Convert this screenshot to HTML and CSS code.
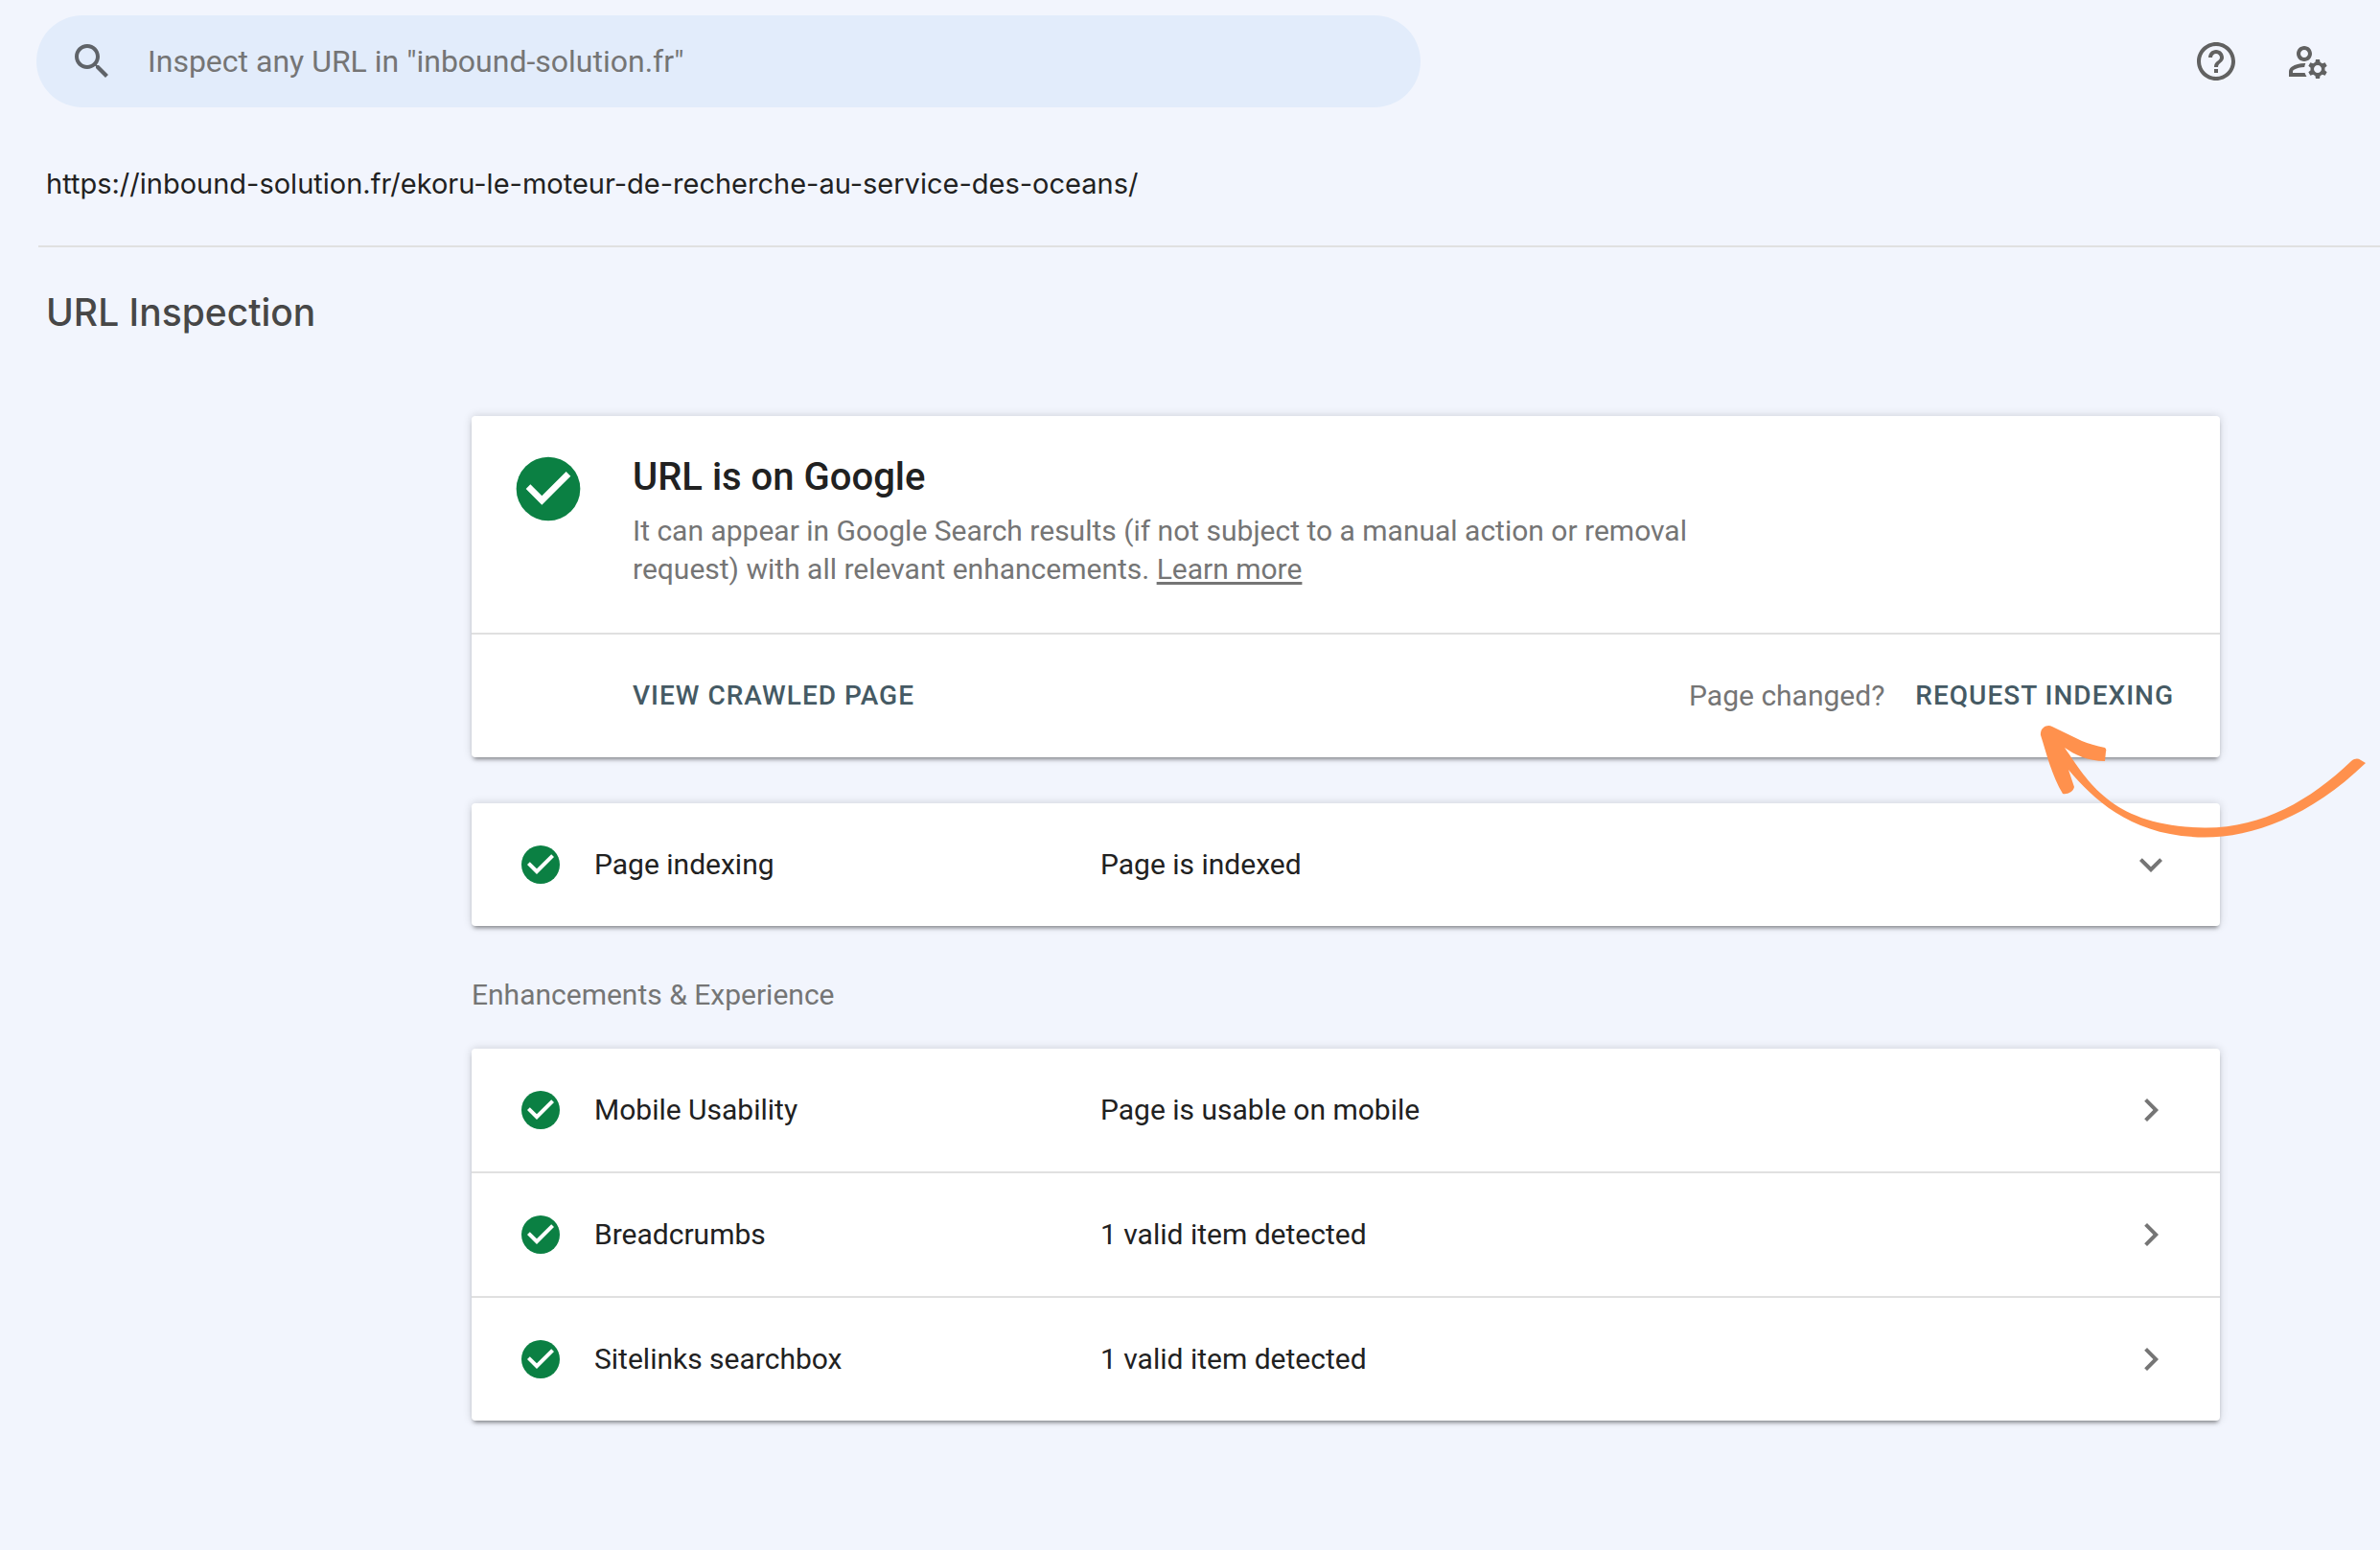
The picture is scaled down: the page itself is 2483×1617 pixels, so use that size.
FILE: index.html
```html
<!DOCTYPE html>
<html lang="en">
<head>
<meta charset="utf-8">
<title>URL Inspection</title>
<link rel="stylesheet" href="styles.css">
</head>
<body>
<svg class="sprite" aria-hidden="true">
  <symbol id="check" viewBox="0 0 24 24"><circle cx="12" cy="12" r="10" fill="#0b8043"/><path fill="#fff" d="M10 17l-5-5 1.410-1.410L10 14.170l7.590-7.590L19 8z"/></symbol>
  <symbol id="chevron-right" viewBox="0 0 24 24"><path d="M10 6L8.590 7.410 13.170 12l-4.580 4.590L10 18l6-6z"/></symbol>
  <symbol id="chevron-down" viewBox="0 0 24 24"><path d="M16.590 8.590L12 13.170 7.410 8.590 6 10l6 6 6-6z"/></symbol>
</svg>

<header class="topbar">
  <form class="search" role="search">
    <svg class="icon" viewBox="0 0 24 24" aria-hidden="true"><path d="M15.500 14h-.790l-.280-.270C15.410 12.590 16 11.110 16 9.500 16 5.910 13.090 3 9.500 3S3 5.910 3 9.500 5.910 16 9.500 16c1.610 0 3.090-.590 4.230-1.570l.270.280v.790l5 4.990L20.490 19l-4.990-5zm-6 0C7.010 14 5 11.990 5 9.500S7.010 5 9.500 5 14 7.010 14 9.500 11.990 14 9.500 14z"/></svg>
    <input class="search-input" type="text" aria-label="Inspect a URL" placeholder="Inspect any URL in &quot;inbound-solution.fr&quot;">
  </form>
  <div class="tools">
    <button class="icon-button" type="button" aria-label="Help">
      <svg class="icon" viewBox="0 0 24 24"><path d="M11 18h2v-2h-2v2zm1-16C6.480 2 2 6.480 2 12s4.480 10 10 10 10-4.480 10-10S17.520 2 12 2zm0 18c-4.410 0-8-3.590-8-8s3.590-8 8-8 8 3.590 8 8-3.590 8-8 8zm0-14c-2.210 0-4 1.790-4 4h2c0-1.100.9-2 2-2s2 .9 2 2c0 2-3 1.750-3 5h2c0-2.250 3-2.500 3-5 0-2.210-1.790-4-4-4z"/></svg>
    </button>
    <button class="icon-button" type="button" aria-label="User settings">
      <svg class="icon" viewBox="0 0 24 24"><path d="M4 18v-.65c0-.34.16-.66.41-.81C6.1 15.53 8.03 15 10 15c.03 0 .05 0 .08.01.1-.7.3-1.37.59-1.98-.22-.02-.44-.03-.67-.03-2.42 0-4.68.67-6.61 1.82-.88.52-1.39 1.5-1.39 2.53V20h9.260c-.42-.6-.75-1.280-.97-2H4z"/><path d="M10 12c2.210 0 4-1.790 4-4s-1.790-4-4-4-4 1.790-4 4 1.790 4 4 4zm0-6c1.100 0 2 .9 2 2s-.9 2-2 2-2-.9-2-2 .9-2 2-2z"/><path d="M20.750 16c0-.22-.03-.42-.06-.63l1.140-1.010-1-1.730-1.450.49c-.32-.27-.68-.48-1.080-.63L18 11h-2l-.3 1.490c-.4.15-.76.36-1.080.63l-1.450-.49-1 1.730 1.140 1.010c-.03.21-.06.41-.06.63s.03.42.06.63l-1.140 1.010 1 1.730 1.450-.49c.32.27.68.48 1.080.63L16 21h2l.3-1.490c.4-.15.76-.36 1.080-.63l1.450.49 1-1.730-1.140-1.010c.03-.21.06-.41.06-.63zM17 18c-1.100 0-2-.9-2-2s.9-2 2-2 2 .9 2 2-.9 2-2 2z"/></svg>
    </button>
  </div>
</header>

<div class="url-bar">https://inbound-solution.fr/ekoru-le-moteur-de-recherche-au-service-des-oceans/</div>

<main>
  <h1 class="page-title">URL Inspection</h1>
  <div class="content">
    <section class="card">
      <div class="verdict">
        <svg class="verdict-icon" aria-hidden="true"><use href="#check"/></svg>
        <div class="verdict-text">
          <h2 class="verdict-title">URL is on Google</h2>
          <p class="verdict-copy">It can appear in Google Search results (if not subject to a manual action or removal request) with all relevant enhancements. <a class="link" href="#">Learn more</a></p>
        </div>
      </div>
      <div class="actions">
        <button class="text-button" type="button">VIEW CRAWLED PAGE</button>
        <div class="recrawl">
          <span class="hint">Page changed?</span>
          <div class="callout">
            <button class="text-button" type="button">REQUEST INDEXING</button>
            <svg class="arrow" viewBox="0 0 373 150" aria-hidden="true">
              <path d="M44 40C70 78 95 122 190 123.500C250 124 300 95 343 54C347 51 350 51 353 53L358 56C300 112 240 133.500 190 133.500C115 133 75 95 48 63L54 81C53 86 47 89 42 88C31 70 25 46 19 27C18 20 25 15 31 18L62 33Q72 37 86 40Q88 42 87 44L86 54C68 54 54 47 44 40Z"/>
            </svg>
          </div>
        </div>
      </div>
    </section>

    <section class="card">
      <button class="row" type="button">
        <svg class="icon" aria-hidden="true"><use href="#check"/></svg>
        <span class="row-name">Page indexing</span>
        <span class="row-value">Page is indexed</span>
        <svg class="icon chevron" aria-hidden="true"><use href="#chevron-down"/></svg>
      </button>
    </section>

    <h3 class="group-title">Enhancements &amp; Experience</h3>

    <section class="card">
      <button class="row" type="button">
        <svg class="icon" aria-hidden="true"><use href="#check"/></svg>
        <span class="row-name">Mobile Usability</span>
        <span class="row-value">Page is usable on mobile</span>
        <svg class="icon chevron" aria-hidden="true"><use href="#chevron-right"/></svg>
      </button>
      <button class="row" type="button">
        <svg class="icon" aria-hidden="true"><use href="#check"/></svg>
        <span class="row-name">Breadcrumbs</span>
        <span class="row-value">1 valid item detected</span>
        <svg class="icon chevron" aria-hidden="true"><use href="#chevron-right"/></svg>
      </button>
      <button class="row" type="button">
        <svg class="icon" aria-hidden="true"><use href="#check"/></svg>
        <span class="row-name">Sitelinks searchbox</span>
        <span class="row-value">1 valid item detected</span>
        <svg class="icon chevron" aria-hidden="true"><use href="#chevron-right"/></svg>
      </button>
    </section>
  </div>
</main>
</body>
</html>
```
FILE: styles.css
```css
* {
  box-sizing: border-box;
}

body {
  margin: 0;
  min-height: 100vh;
  background: #f2f5fd;
  color: #212121;
  font-family: Roboto, "Liberation Sans", sans-serif;
  font-size: 30px;
  line-height: 40px;
  overflow-x: hidden;
}

button {
  padding: 0;
  border: 0;
  background: none;
  color: inherit;
  font: inherit;
  text-align: left;
  cursor: pointer;
}

h1, h2, h3, p {
  margin: 0;
}

.sprite {
  display: none;
}

.icon {
  display: block;
  flex: none;
  width: 48px;
  height: 48px;
  fill: currentColor;
}

.topbar {
  display: flex;
  align-items: center;
  justify-content: space-between;
  gap: 48px;
  padding: 16px 51px 16px 38px;
}

.search {
  display: flex;
  flex: 0 1 1444px;
  align-items: center;
  gap: 34px;
  height: 96px;
  padding: 0 34px;
  border-radius: 48px;
  background: #e2ecfb;
  color: #5f6368;
}

.search-input {
  flex: 1;
  min-width: 0;
  padding: 0;
  border: 0;
  outline: 0;
  background: none;
  color: #212121;
  font: inherit;
  font-size: 32px;
}

.search-input::placeholder {
  color: #757575;
  opacity: 1;
}

.tools {
  display: flex;
  gap: 48px;
  color: #616161;
}

.url-bar {
  margin-left: 40px;
  padding: 44px 8px;
  border-bottom: 2px solid #e0e0e0;
  font-family: Inter, Roboto, sans-serif;
  font-size: 29px;
}

.page-title {
  padding: 44px 48px 0;
  color: #474747;
  font-family: Inter, Roboto, sans-serif;
  font-size: 39px;
  font-weight: 500;
  line-height: 48px;
}

.content {
  max-width: 1824px;
  margin: 84px 167px 0 auto;
}

.card {
  border-radius: 4px;
  background: #fff;
  box-shadow: 0 4px 4px -2px rgba(0, 0, 0, .4), 0 0 10px rgba(0, 0, 0, .16);
}

.card + .card {
  margin-top: 48px;
}

.verdict {
  display: flex;
  gap: 48px;
  padding: 36px 40px 46px;
}

.verdict-icon {
  flex: none;
  width: 80px;
  height: 80px;
}

.verdict-title {
  font-size: 40px;
  font-weight: 500;
  line-height: 56px;
}

.verdict-copy {
  max-width: 1120px;
  margin-top: 8px;
  color: #757575;
}

.link {
  color: inherit;
  text-underline-offset: 3px;
}

.actions {
  display: flex;
  align-items: center;
  justify-content: space-between;
  height: 130px;
  padding: 0 48px 0 168px;
  border-top: 2px solid #e0e0e0;
}

.text-button {
  color: #455a64;
  font-size: 28px;
  font-weight: 500;
  letter-spacing: 1px;
}

.recrawl {
  display: flex;
  align-items: center;
  gap: 32px;
}

.hint {
  color: #757575;
}

.callout {
  display: flex;
  position: relative;
}

/* Hand-drawn pointer floating over the button and the card below */
.arrow {
  position: absolute;
  top: 34px;
  right: -215px;
  z-index: 1;
  width: 373px;
  height: 150px;
  fill: #ff914d;
  pointer-events: none;
}

.row {
  display: flex;
  align-items: center;
  width: 100%;
  height: 128px;
  padding: 0 48px;
}

.row + .row {
  height: 130px;
  border-top: 2px solid #e0e0e0;
}

.row-name {
  width: 528px;
  margin-left: 32px;
}

.row-value {
  flex: 1;
}

.chevron {
  color: #757575;
}

.group-title {
  margin: 52px 0 36px;
  color: #757575;
  font-size: 30px;
  font-weight: 400;
}
```
